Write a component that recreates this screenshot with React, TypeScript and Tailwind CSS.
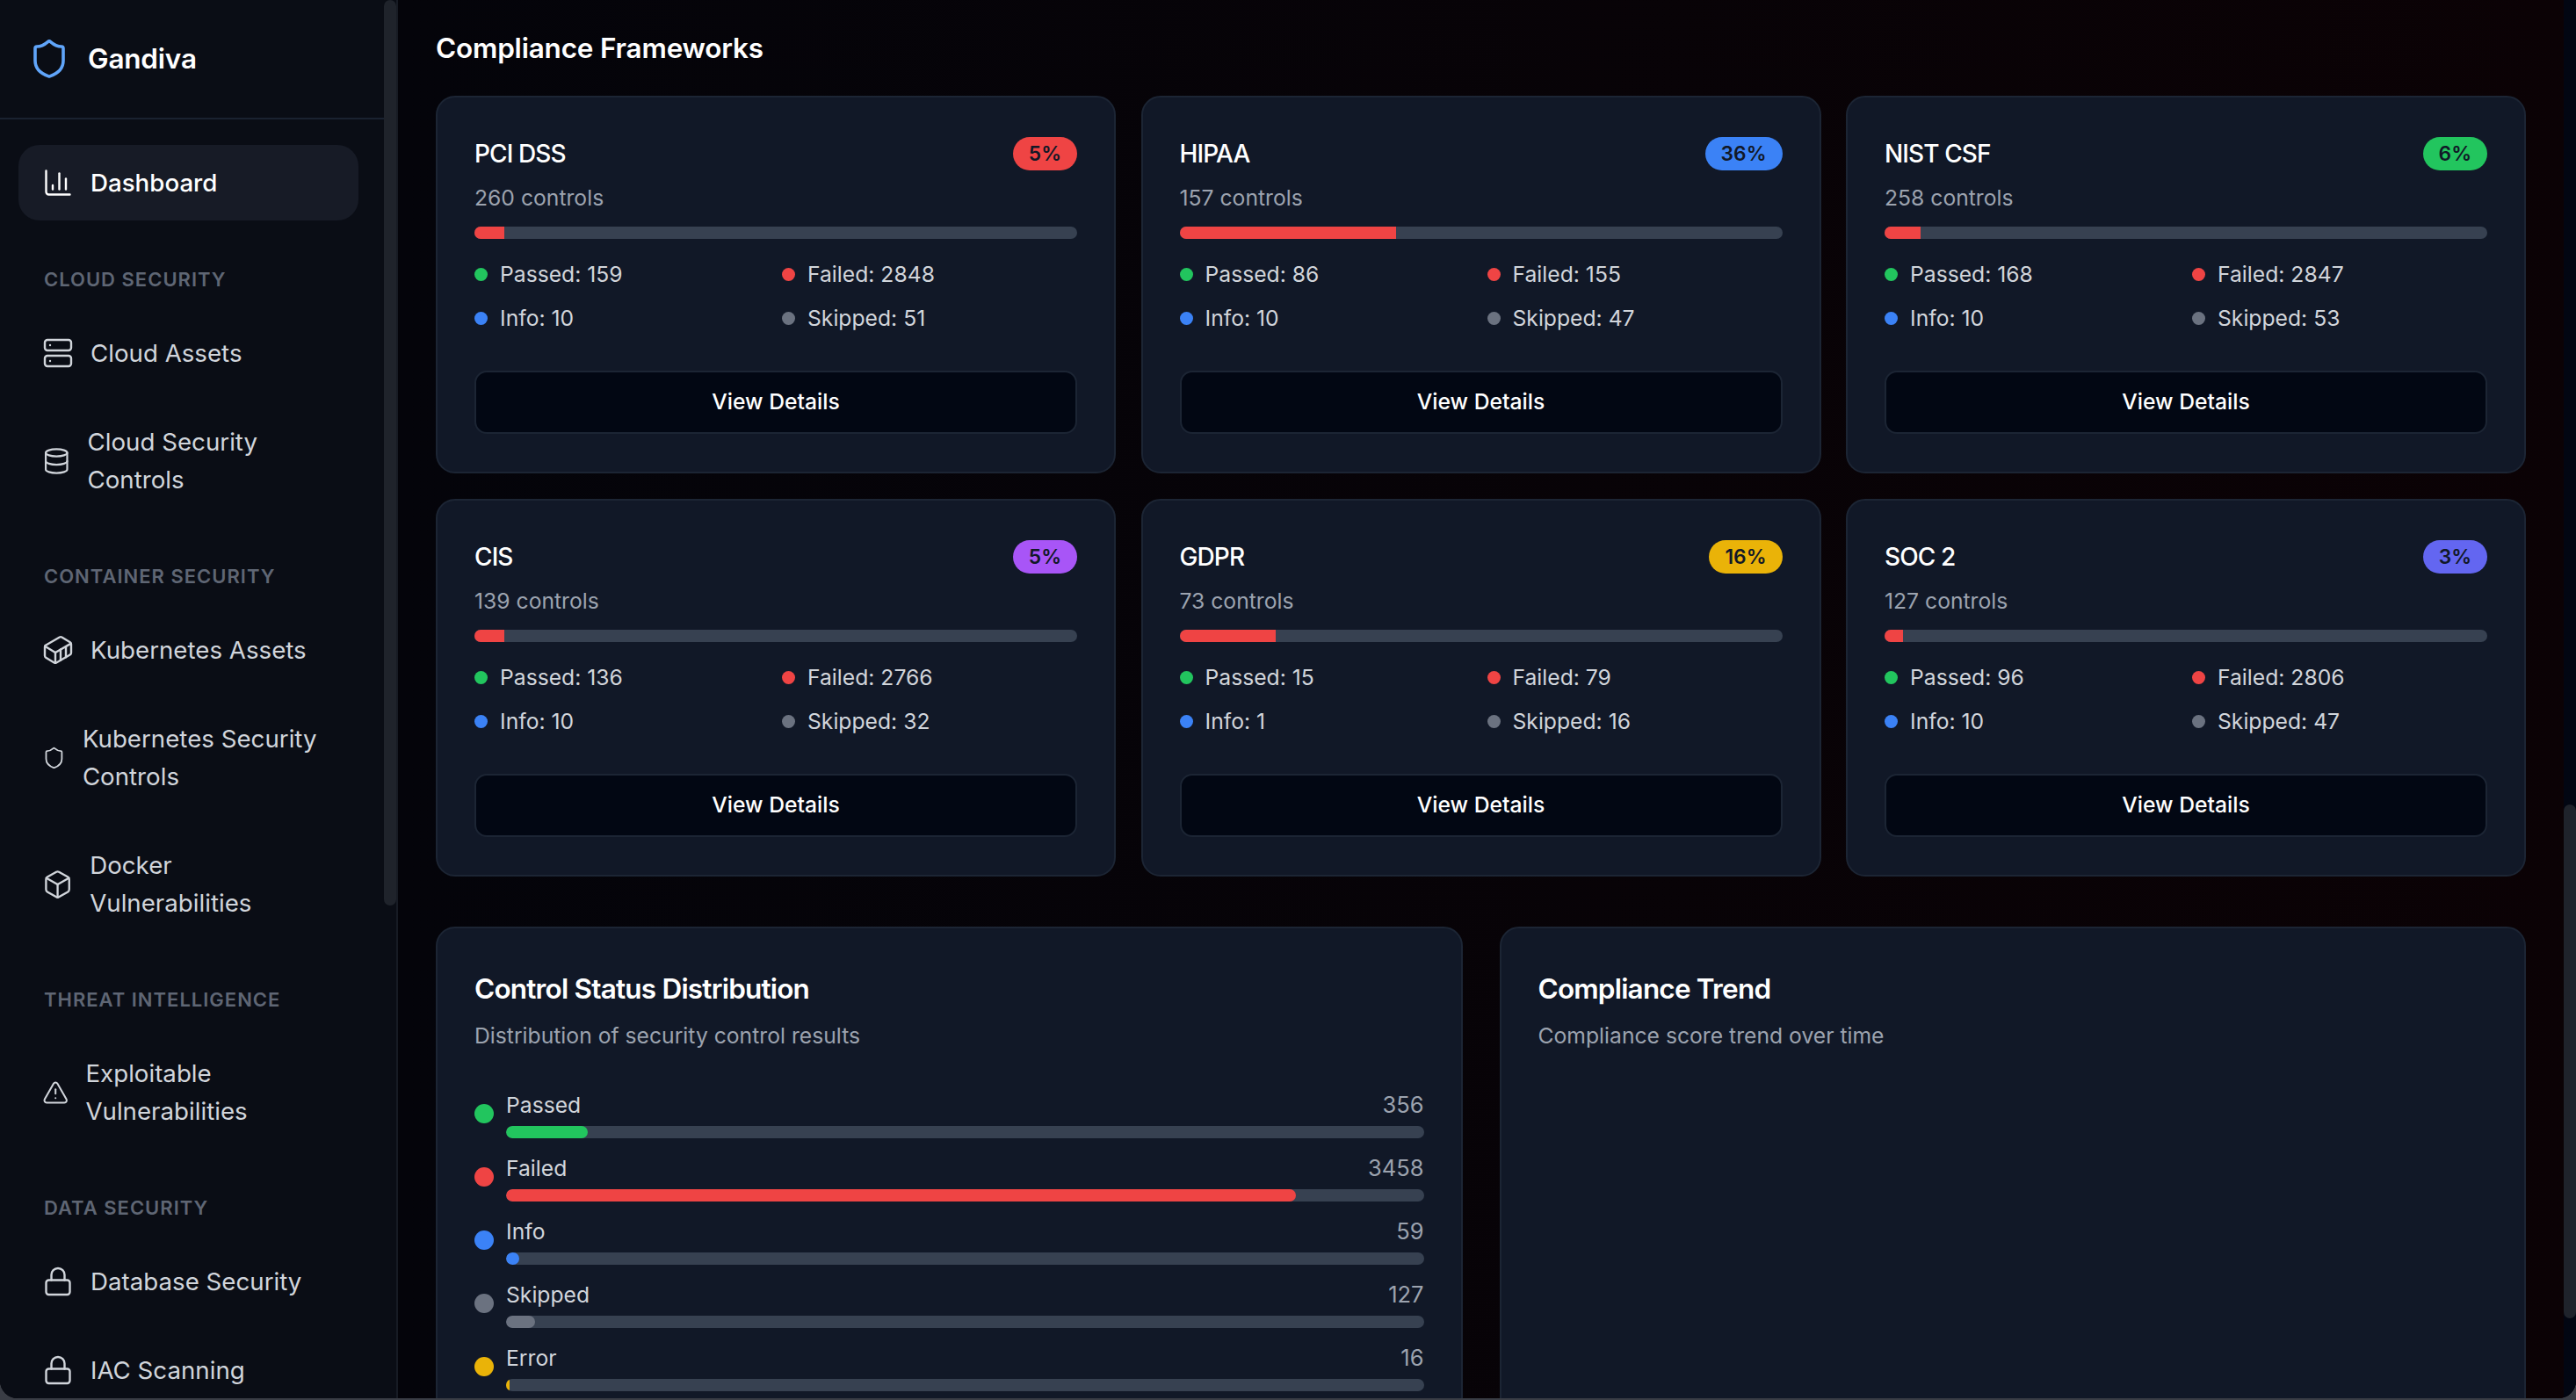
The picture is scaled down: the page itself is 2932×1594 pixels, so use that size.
import React from "react";
import { ChartColumn, Server, Database, Container, Shield, Box, TriangleAlert, Lock } from "lucide-react";

type Fw = { name: string; controls: number; pct: number; badge: string; passed: number; failed: number; info: number; skipped: number };

const frameworks: Fw[] = [
  { name: "PCI DSS", controls: 260, pct: 5, badge: "bg-[#ef4444]", passed: 159, failed: 2848, info: 10, skipped: 51 },
  { name: "HIPAA", controls: 157, pct: 36, badge: "bg-[#3b82f6]", passed: 86, failed: 155, info: 10, skipped: 47 },
  { name: "NIST CSF", controls: 258, pct: 6, badge: "bg-[#22c55e]", passed: 168, failed: 2847, info: 10, skipped: 53 },
  { name: "CIS", controls: 139, pct: 5, badge: "bg-[#a855f7]", passed: 136, failed: 2766, info: 10, skipped: 32 },
  { name: "GDPR", controls: 73, pct: 16, badge: "bg-[#eab308]", passed: 15, failed: 79, info: 1, skipped: 16 },
  { name: "SOC 2", controls: 127, pct: 3, badge: "bg-[#6366f1]", passed: 96, failed: 2806, info: 10, skipped: 47 },
];

const statuses = [
  { label: "Passed", value: 356, color: "bg-[#22c55e]" },
  { label: "Failed", value: 3458, color: "bg-[#ef4444]" },
  { label: "Info", value: 59, color: "bg-[#3b82f6]" },
  { label: "Skipped", value: 127, color: "bg-[#6b7280]" },
  { label: "Error", value: 16, color: "bg-[#eab308]" },
];
const total = 4016;

function NavItem({ icon: Icon, label, active }: { icon: React.ElementType; label: string; active?: boolean }) {
  return (
    <div className={`flex items-center gap-[19px] rounded-[24px] px-[27px] py-[21.5px] text-[27.7px] leading-[43px] ${active ? "bg-[#171b26] text-white [font-weight:450]" : "text-[#d1d5db]"}`}>
      <Icon className="h-9 w-9" strokeWidth={1.6} />
      <span>{label}</span>
    </div>
  );
}

function NavSection({ title, children }: { title: string; children: React.ReactNode }) {
  return (
    <div className="mt-[50px]">
      <div className="mb-6 h-[34px] px-[29px] text-[22px] font-semibold uppercase leading-[34px] tracking-[1px] text-[#5f6674]">{title}</div>
      <div className="flex flex-col gap-[15px]">{children}</div>
    </div>
  );
}

function Stat({ color, text }: { color: string; text: string }) {
  return (
    <div className="flex h-9 items-center gap-[14px] text-[24.7px] leading-9 text-[#d1d5db]">
      <span className={`h-[15px] w-[15px] rounded-full ${color}`} />
      <span>{text}</span>
    </div>
  );
}

function FrameworkCard({ f }: { f: Fw }) {
  return (
    <div className="rounded-[22px] border-2 border-[#1c2534] bg-[#111827] px-[42px] pb-[43px] pt-[45px]">
      <div className="flex h-[38px] items-center justify-between">
        <span className="text-[28px] tracking-[-0.9px] text-white [font-weight:550]">{f.name}</span>
        <span className={`flex h-[38px] items-center rounded-full px-[18px] text-[22.75px] font-semibold text-[#111827] ${f.badge}`}>{f.pct}%</span>
      </div>
      <div className="mt-[13px] h-9 text-[24.7px] leading-9 text-[#9ca3af]">{f.controls} controls</div>
      <div className="mt-[15px] h-[14px] overflow-hidden rounded-full bg-[#374151]">
        <div className="h-full bg-[#ef4444]" style={{ width: `${f.pct}%` }} />
      </div>
      <div className="mt-[22px] grid grid-cols-2 gap-x-[14px] gap-y-[14px]">
        <Stat color="bg-[#22c55e]" text={`Passed: ${f.passed}`} />
        <Stat color="bg-[#ef4444]" text={`Failed: ${f.failed}`} />
        <Stat color="bg-[#3b82f6]" text={`Info: ${f.info}`} />
        <Stat color="bg-[#6b7280]" text={`Skipped: ${f.skipped}`} />
      </div>
      <button className="mt-[42px] flex h-[72px] w-full items-center justify-center rounded-[14px] border-2 border-[#1c2534] bg-[#020713] text-[24.7px] font-medium text-white">
        View Details
      </button>
    </div>
  );
}

function ScrollTrack({ offset, size, className }: { offset: number; size: number; className: string }) {
  return (
    <div className={`w-[14px] shrink-0 ${className}`}>
      <div style={{ height: offset }} />
      <div className="w-full rounded-full bg-[#1f232b]" style={{ height: size }} />
    </div>
  );
}

export default function App() {
  return (
    <div className="h-screen w-screen overflow-hidden bg-[#3a3d45] font-['Inter',sans-serif]">
      <div className="flex h-[1592px] w-full overflow-hidden rounded-b-[20px] bg-[#05040a]">
        <aside className="flex h-full w-[453px] shrink-0 border-r-2 border-[#171b24] bg-[#0a0d15]">
          <div className="min-w-0 flex-1 overflow-hidden">
            <div className="flex h-[136px] items-center gap-5 border-b-2 border-[#1a2230] px-8">
              <Shield className="h-12 w-12 text-[#60a5fa]" strokeWidth={1.8} />
              <span className="text-[31.5px] font-semibold tracking-[-0.2px] text-white">Gandiva</span>
            </div>
            <nav className="pl-[21px] pr-[29px] pt-[29px]">
              <NavItem icon={ChartColumn} label="Dashboard" active />
              <NavSection title="Cloud Security">
                <NavItem icon={Server} label="Cloud Assets" />
                <NavItem icon={Database} label="Cloud Security Controls" />
              </NavSection>
              <NavSection title="Container Security">
                <NavItem icon={Container} label="Kubernetes Assets" />
                <NavItem icon={Shield} label="Kubernetes Security Controls" />
                <NavItem icon={Box} label="Docker Vulnerabilities" />
              </NavSection>
              <NavSection title="Threat Intelligence">
                <NavItem icon={TriangleAlert} label="Exploitable Vulnerabilities" />
              </NavSection>
              <NavSection title="Data Security">
                <NavItem icon={Lock} label="Database Security" />
                <NavItem icon={Lock} label="IAC Scanning" />
              </NavSection>
            </nav>
          </div>
          <ScrollTrack offset={0} size={1031} className="bg-[#0a0d15]" />
        </aside>

        <main className="flex h-full min-w-0 flex-1 bg-gradient-to-r from-[#04040a] to-[#0b0205]">
          <div className="min-w-0 flex-1 overflow-hidden px-[43px] pt-[33px]">
            <h2 className="h-11 text-[31.5px] font-semibold leading-[44px] tracking-[-0.2px] text-white">Compliance Frameworks</h2>
            <div className="mt-8 grid grid-cols-3 gap-x-[28.5px] gap-y-[29px]">
              {frameworks.map((f) => (
                <FrameworkCard key={f.name} f={f} />
              ))}
            </div>
            <div className="mt-[57px] grid grid-cols-2 gap-x-[42px]">
              <section className="h-[800px] rounded-[22px] border-2 border-[#1c2534] bg-[#111827] px-[42px] pt-[47px]">
                <h3 className="text-[31.5px] font-semibold leading-11 tracking-[-0.8px] text-white">Control Status Distribution</h3>
                <p className="mt-[13px] text-[24.7px] leading-9 text-[#9ca3af]">Distribution of security control results</p>
                <div className="mt-[38px] flex flex-col gap-[6px]">
                  {statuses.map((s) => (
                    <div key={s.label} className="flex h-[66px] items-center gap-[14px]">
                      <span className={`h-[22px] w-[22px] shrink-0 rounded-full ${s.color}`} />
                      <div className="min-w-0 flex-1">
                        <div className="flex h-9 items-center justify-between text-[24.7px] leading-9">
                          <span className="text-[#d1d5db]">{s.label}</span>
                          <span className="text-[25.5px] text-[#9ca3af]">{s.value}</span>
                        </div>
                        <div className="mt-[6px] h-[14px] overflow-hidden rounded-full bg-[#374151]">
                          <div className={`h-full rounded-full ${s.color}`} style={{ width: `${(s.value / total) * 100}%` }} />
                        </div>
                      </div>
                    </div>
                  ))}
                </div>
              </section>
              <section className="h-[800px] rounded-[22px] border-2 border-[#1c2534] bg-[#111827] px-[42px] pt-[47px]">
                <h3 className="text-[31.5px] font-semibold leading-11 tracking-[-0.8px] text-white">Compliance Trend</h3>
                <p className="mt-[13px] text-[24.7px] leading-9 text-[#9ca3af]">Compliance score trend over time</p>
              </section>
            </div>
          </div>
          <ScrollTrack offset={916} size={585} className="bg-[#020612]" />
        </main>
      </div>
    </div>
  );
}
